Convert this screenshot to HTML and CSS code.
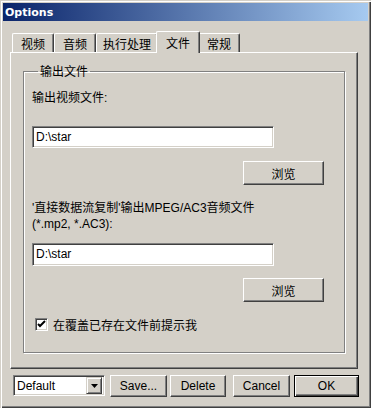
FILE: index.html
```html
<!DOCTYPE html>
<html>
<head>
<meta charset="utf-8">
<link rel="stylesheet" href="styles.css">
</head>
<body>
<div class="window">
  <div class="titlebar"><span class="title">Options</span></div>
  <div class="tabs">
    <div class="tab">视频</div>
    <div class="tab">音频</div>
    <div class="tab wide">执行处理</div>
    <div class="tab active">文件</div>
    <div class="tab">常规</div>
  </div>
  <div class="panel">
    <fieldset class="group">
      <legend class="legend">输出文件</legend>
      <div class="label first">输出视频文件:</div>
      <div class="field">D:\star</div>
      <div class="btnrow"><div class="btn browse">浏览</div></div>
      <div class="label second">'直接数据流复制'输出MPEG/AC3音频文件<br>(*.mp2, *.AC3):</div>
      <div class="field f2">D:\star</div>
      <div class="btnrow b2"><div class="btn browse">浏览</div></div>
      <div class="check">
        <span class="box"><svg width="9" height="9" viewBox="0 0 9 9"><path d="M1 4 L3 6 L8 1" fill="none" stroke="#000" stroke-width="2"/></svg></span>
        <span class="checktext">在覆盖已存在文件前提示我</span>
      </div>
    </fieldset>
  </div>
  <div class="footer">
    <div class="combo">
      <span class="combotext">Default</span>
      <span class="combobtn"><svg width="7" height="4" viewBox="0 0 7 4"><path d="M0 0 H7 L3.5 4 Z" fill="#000"/></svg></span>
    </div>
    <div class="btn fbtn save">Save...</div>
    <div class="btn fbtn delete">Delete</div>
    <div class="btn fbtn cancel">Cancel</div>
    <div class="btn fbtn ok">OK</div>
  </div>
</div>
</body>
</html>
```

FILE: styles.css
```css
* { box-sizing: border-box; }
html, body { margin: 0; padding: 0; }
body {
  background: #d4d0c8;
  font-family: "Liberation Sans", "Noto Sans CJK SC", sans-serif;
  font-size: 12px;
  color: #000;
}
.window {
  width: 371px;
  height: 408px;
  background: #d4d0c8;
  padding: 3px;
  box-shadow: inset 1px 1px #d4d0c8, inset 2px 2px #fff, inset -1px -1px #404040, inset -2px -2px #808080;
  display: flex;
  flex-direction: column;
}
.titlebar {
  height: 18px;
  background: linear-gradient(to right, #0a246a, #a6caf0);
  display: flex;
  align-items: center;
  padding-left: 2px;
}
.title {
  color: #fff;
  font-family: "DejaVu Sans", sans-serif;
  font-weight: bold;
  font-size: 11px;
}
.tabs {
  display: flex;
  align-items: flex-end;
  height: 21px;
  margin-top: 10px;
  margin-left: 9px;
  position: relative;
  z-index: 1;
}
.tab {
  height: 19px;
  width: 42px;
  border-top: 1px solid #fff;
  border-left: 1px solid #fff;
  border-right: 1px solid #404040;
  box-shadow: inset -1px 0 #808080;
  border-radius: 2px 2px 0 0;
  display: flex;
  align-items: center;
  justify-content: center;
  font-family: "Noto Sans CJK SC", sans-serif;
  font-size: 12px;
  padding-top: 1px;
}
.tab.wide { width: 62px; }
.tab.active {
  height: 22px;
  width: 44px;
  margin: 0 -2px -1px -2px;
  background: #d4d0c8;
  position: relative;
  z-index: 2;
  padding-bottom: 2px;
}
.panel {
  margin-left: 7px;
  width: 348px;
  height: 317px;
  border-top: 1px solid #fff;
  border-left: 1px solid #fff;
  border-right: 1px solid #404040;
  border-bottom: 1px solid #404040;
  box-shadow: inset -1px -1px #808080;
  padding: 0 12px 0 12px;
}
.group {
  margin: 11px 0 0 0;
  padding: 0 0 0 8px;
  height: 289px;
  border: 1px solid #808080;
  box-shadow: inset 1px 1px #fff, 1px 1px #fff;
  display: flex;
  flex-direction: column;
}
.legend {
  font-family: "Noto Sans CJK SC", sans-serif;
  padding: 0 2px;
  margin-left: 6px;
  line-height: 14px;
}
.label {
  line-height: 14px;
  font-family: "Liberation Sans", "Noto Sans CJK SC", sans-serif;
}
.label.first { margin-top: 13px; }
.label.second { margin-top: 15px; line-height: 16px; }
.field {
  width: 242px;
  height: 22px;
  background: #fff;
  border-top: 1px solid #808080;
  border-left: 1px solid #808080;
  border-right: 1px solid #fff;
  border-bottom: 1px solid #fff;
  box-shadow: inset 1px 1px #404040, inset -1px -1px #d4d0c8;
  padding: 3px 0 0 3px;
  line-height: 14px;
  margin-top: 21px;
}
.field.f2 { margin-top: 11px; height: 23px; }
.btnrow {
  display: flex;
  justify-content: flex-end;
  padding-right: 20px;
  margin-top: 13px;
}
.btnrow.b2 { margin-top: 12px; }
.btn {
  background: #d4d0c8;
  border-top: 1px solid #fff;
  border-left: 1px solid #fff;
  border-right: 1px solid #404040;
  border-bottom: 1px solid #404040;
  box-shadow: inset -1px -1px #808080;
  display: flex;
  align-items: center;
  justify-content: center;
}
.browse {
  width: 81px;
  height: 24px;
  font-family: "Noto Sans CJK SC", sans-serif;
}
.check {
  display: flex;
  align-items: center;
  margin-top: 15px;
  margin-left: 3px;
  height: 14px;
}
.box {
  width: 13px;
  height: 13px;
  background: #fff;
  border-top: 1px solid #808080;
  border-left: 1px solid #808080;
  border-right: 1px solid #fff;
  border-bottom: 1px solid #fff;
  box-shadow: inset 1px 1px #404040, inset -1px -1px #d4d0c8;
  display: flex;
  align-items: center;
  justify-content: center;
}
.checktext {
  margin-left: 5px;
  font-family: "Noto Sans CJK SC", sans-serif;
}
.footer {
  display: flex;
  margin-top: 6px;
  margin-left: 10px;
  height: 22px;
}
.combo {
  width: 92px;
  height: 21px;
  background: #fff;
  border-top: 1px solid #808080;
  border-left: 1px solid #808080;
  border-right: 1px solid #fff;
  border-bottom: 1px solid #fff;
  box-shadow: inset 1px 1px #404040, inset -1px -1px #d4d0c8;
  display: flex;
  align-items: center;
  padding: 2px;
}
.combotext { flex: 1; padding-left: 1px; }
.combobtn {
  width: 16px;
  height: 17px;
  background: #d4d0c8;
  border-top: 1px solid #d4d0c8;
  border-left: 1px solid #d4d0c8;
  border-right: 1px solid #404040;
  border-bottom: 1px solid #404040;
  box-shadow: inset 1px 1px #fff, inset -1px -1px #808080;
  display: flex;
  align-items: center;
  justify-content: center;
}
.fbtn { height: 22px; }
.save { width: 57px; margin-left: 5px; }
.delete { width: 56px; margin-left: 3px; }
.cancel { width: 57px; margin-left: 7px; }
.ok {
  width: 65px;
  margin-left: 4px;
  border: 1px solid #000;
  box-shadow: inset 1px 1px #fff, inset -1px -1px #404040, inset -2px -2px #808080;
}
```
